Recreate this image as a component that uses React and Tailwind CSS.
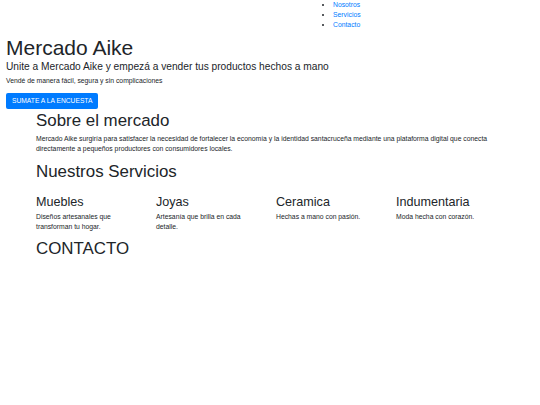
const servicios = [
    { title: 'Muebles', text: 'Diseños artesanales que transforman tu hogar.' },
    { title: 'Joyas', text: 'Artesanía que brilla en cada detalle.' },
    { title: 'Ceramica', text: 'Hechas a mano con pasión.' },
    { title: 'Indumentaria', text: 'Moda hecha con corazón.' },
];

const App = () => {
    return (
        <div className="min-h-[405px] bg-white text-[#212529] font-['Liberation_Sans',Arial,sans-serif]">
            {/* Nav */}
            <nav>
                <ul className="list-disc pl-[333px] text-[6.8px] leading-[10px]">
                    <li><a href="#" className="text-[#007bff]">Nosotros</a></li>
                    <li><a href="#" className="text-[#007bff]">Servicios</a></li>
                    <li><a href="#" className="text-[#007bff]">Contacto</a></li>
                </ul>
            </nav>

            {/* Hero */}
            <header className="px-[6px] pt-[5px]">
                <h1 className="text-[21px] leading-[25px]">Mercado Aike</h1>
                <h4 className="text-[10.2px] leading-[15px] mt-[-1px]">
                    Unite a Mercado Aike y empezá a vender tus productos hechos a mano
                </h4>
                <p className="text-[6.8px] leading-[11px] mt-[1px]">Vendé de manera fácil, segura y sin complicaciones</p>
                <button className="mt-[6px] h-[16px] px-[6px] bg-[#007bff] text-white text-[6.7px] rounded-[2px]">
                    SUMATE A LA ENCUESTA
                </button>
            </header>

            {/* Contenido */}
            <main className="w-[480px] ml-[36px]">
                <section>
                    <h2 className="text-[16.9px] leading-[20px] mt-[1px]">Sobre el mercado</h2>
                    <p className="text-[6.8px] leading-[10px] mt-[3px]">
                        Mercado Aike surgiría para satisfacer la necesidad de fortalecer la economía y la identidad santacruceña mediante una plataforma digital que conecta directamente a pequeños productores con consumidores locales.
                    </p>
                </section>

                <section className="mt-[8px]">
                    <h2 className="text-[16.9px] leading-[20px]">Nuestros Servicios</h2>
                    <div className="grid grid-cols-4 mt-[13px]">
                        {servicios.map((s) => (
                            <div key={s.title} className="pr-[12px]">
                                <h4 className="text-[12.6px] leading-[15px]">{s.title}</h4>
                                <p className="text-[6.8px] leading-[10px] mt-[2px] pr-[10px]">{s.text}</p>
                            </div>
                        ))}
                    </div>
                </section>

                <section className="mt-[7px]">
                    <h2 className="text-[16.9px] leading-[20px]">CONTACTO</h2>
                </section>
            </main>
        </div>
    );
};

export default App;
